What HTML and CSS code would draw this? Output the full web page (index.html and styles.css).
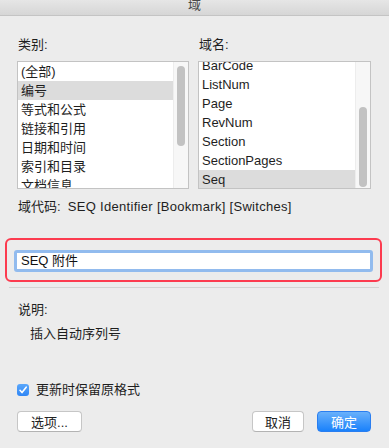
FILE: index.html
```html
<!DOCTYPE html>
<html lang="zh-CN">
<head>
    <meta charset="UTF-8">
    <meta name="viewport" content="width=device-width, initial-scale=1.0">
    <title>域</title>
    <link rel="stylesheet" href="styles.css">
</head>
<body>
    <div class="window">
        <div class="titlebar">域</div>

        <div class="lists">
            <div class="list-col">
                <div class="label">类别:</div>
                <div class="listbox">
                    <ul class="items">
                        <li>(全部)</li>
                        <li class="selected">编号</li>
                        <li>等式和公式</li>
                        <li>链接和引用</li>
                        <li>日期和时间</li>
                        <li>索引和目录</li>
                        <li>文档信息</li>
                    </ul>
                    <div class="scrollbar"><div class="thumb thumb-top"></div></div>
                </div>
            </div>
            <div class="list-col">
                <div class="label">域名:</div>
                <div class="listbox">
                    <ul class="items items-scrolled">
                        <li>BarCode</li>
                        <li>ListNum</li>
                        <li>Page</li>
                        <li>RevNum</li>
                        <li>Section</li>
                        <li>SectionPages</li>
                        <li class="selected">Seq</li>
                    </ul>
                    <div class="scrollbar"><div class="thumb thumb-bottom"></div></div>
                </div>
            </div>
        </div>

        <div class="field-code">域代码:&nbsp; <span class="code-syntax">SEQ Identifier [Bookmark] [Switches]</span></div>

        <div class="highlight">
            <div class="field-input">SEQ 附件</div>
        </div>

        <div class="separator"></div>

        <div class="label desc-label">说明:</div>
        <div class="desc">插入自动序列号</div>

        <label class="check-row">
            <span class="checkbox">
                <svg width="12" height="12" viewBox="0 0 12 12"><path d="M3 6.3 L5 8.6 L9.2 3.2" fill="none" stroke="#fff" stroke-width="1.6" stroke-linecap="round" stroke-linejoin="round"/></svg>
            </span>
            更新时保留原格式
        </label>

        <div class="buttons">
            <button class="btn btn-options">选项...</button>
            <span class="spacer"></span>
            <button class="btn btn-cancel">取消</button>
            <button class="btn btn-primary">确定</button>
        </div>
    </div>
</body>
</html>
```

FILE: styles.css
```css
body {
    margin: 0;
    background-color: #ececec;
    font-family: 'Liberation Sans', 'Noto Sans CJK SC', sans-serif;
    font-size: 13px;
    color: #1e1e1e;
}

.window {
    width: 389px;
    height: 448px;
    overflow: hidden;
}

.titlebar {
    height: 15px;
    line-height: 10px;
    text-align: center;
    overflow: hidden;
    color: #4a4a4a;
    background: linear-gradient(#e6e6e6, #d6d6d6);
    border-bottom: 1px solid #c4c4c4;
}

.lists {
    display: grid;
    grid-template-columns: 172px 173px;
    gap: 9px;
    padding: 20px 0 0 17px;
}

.label {
    line-height: 18px;
    padding-left: 1px;
}

.list-col .label {
    margin-bottom: 7px;
}

.listbox {
    display: flex;
    height: 126px;
    border: 1px solid #c3c3c3;
    background-color: #fff;
    overflow: hidden;
}

.items {
    flex: 1;
    list-style: none;
    margin: 0;
    padding: 0;
}

.items li {
    height: 19px;
    line-height: 19px;
    padding-left: 3px;
    white-space: nowrap;
}

.items-scrolled {
    margin-top: -6px;
}

.items li.selected {
    background-color: #dcdcdc;
}

.scrollbar {
    width: 14px;
    background-color: #f7f7f7;
    border-left: 1px solid #ededed;
    position: relative;
}

.thumb {
    position: absolute;
    left: 3px;
    width: 8px;
    border-radius: 4px;
    background-color: #c2c2c2;
}

.thumb-top {
    top: 4px;
    height: 80px;
}

.thumb-bottom {
    top: 45px;
    height: 80px;
}

.field-code {
    margin-top: 9px;
    padding-left: 18px;
    line-height: 18px;
}

.code-syntax {
    letter-spacing: 0.3px;
}

.highlight {
    margin: 22px 0 0 5px;
    width: 377px;
    padding: 10px 7px 8px 7px;
    border: 2px solid #fc3b4f;
    border-radius: 6px;
    box-sizing: border-box;
}

.field-input {
    height: 22px;
    line-height: 16px;
    padding-left: 4px;
    box-sizing: border-box;
    border: 3px solid #92bbee;
    border-radius: 3px;
    background-color: #fff;
    color: #111;
}

.separator {
    margin: 5px 10px 0 9px;
    height: 1px;
    background-color: #d3d3d3;
}

.desc-label {
    margin-top: 13px;
    padding-left: 18px;
}

.desc {
    margin-top: 6px;
    padding-left: 30px;
    line-height: 18px;
}

.check-row {
    display: flex;
    align-items: center;
    gap: 7px;
    margin-top: 38px;
    padding-left: 17px;
    line-height: 18px;
}

.checkbox {
    display: flex;
    width: 12px;
    height: 12px;
    border-radius: 3px;
    background: linear-gradient(#5aa7fb, #2f86f5);
}

.buttons {
    display: flex;
    gap: 13px;
    margin-top: 12px;
    padding: 0 18px 0 17px;
}

.spacer {
    flex: 1;
}

.btn {
    height: 21px;
    padding: 0;
    font-family: inherit;
    font-size: 13px;
    color: #222;
    background-color: #fff;
    border: 1px solid #c6c6c6;
    border-bottom-color: #b3b3b3;
    border-radius: 4px;
}

.btn-options {
    width: 65px;
}

.btn-cancel {
    width: 52px;
}

.btn-primary {
    width: 54px;
    color: #fff;
    border-color: #2a7ef0;
    background: linear-gradient(#69b1fb, #1a81fb);
}
```
